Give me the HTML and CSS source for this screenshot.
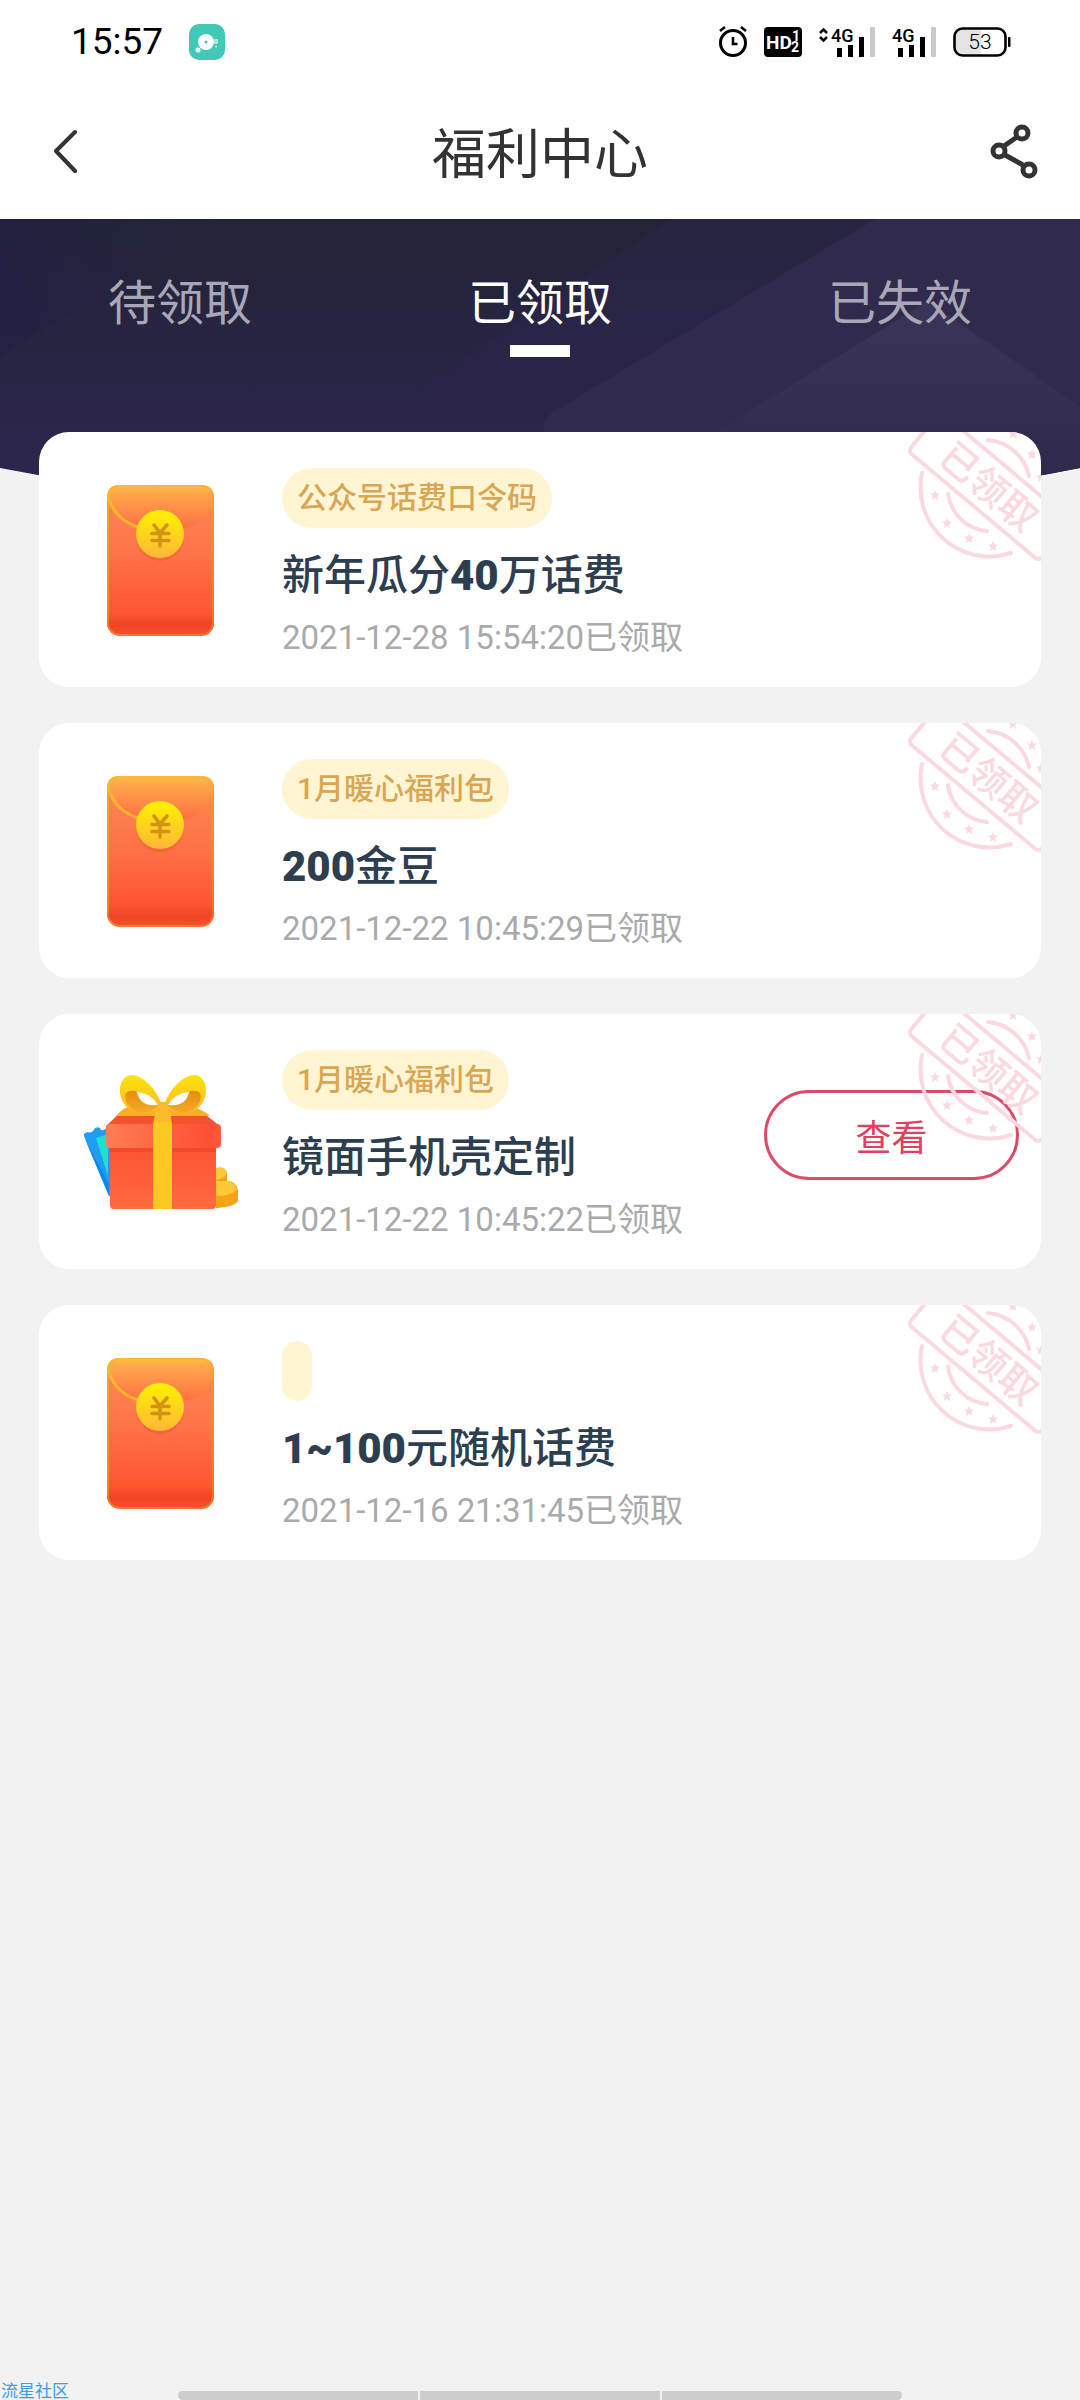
FILE: index.html
```html
<!DOCTYPE html>
<html lang="zh-CN">
<head>
<meta charset="utf-8">
<meta name="viewport" content="width=device-width, initial-scale=1">
<title>福利中心</title>
<link rel="stylesheet" href="styles.css">
</head>
<body>
<svg class="defs" width="0" height="0" aria-hidden="true">
  <defs>
    <linearGradient id="envBody" x1="0" y1="0" x2="0" y2="1">
      <stop offset="0" stop-color="#ff8a55"/><stop offset=".45" stop-color="#ff7449"/><stop offset=".85" stop-color="#ff5532"/><stop offset=".93" stop-color="#f04422"/><stop offset="1" stop-color="#f5532f"/>
    </linearGradient>
    <linearGradient id="envFlap" x1="0" y1="0" x2="0" y2="1">
      <stop offset="0" stop-color="#ffc03c"/><stop offset=".18" stop-color="#ffa84c"/><stop offset="1" stop-color="#ff7043"/>
    </linearGradient>
    <linearGradient id="envEdge" x1="0" y1="0" x2="1" y2="0">
      <stop offset="0" stop-color="#ffb733"/><stop offset="1" stop-color="#ffa030"/>
    </linearGradient>
    <linearGradient id="coin" x1="0" y1="0" x2="0" y2="1">
      <stop offset="0" stop-color="#fff200"/><stop offset="1" stop-color="#ffb638"/>
    </linearGradient>
    <linearGradient id="bow" x1="0" y1="0" x2="0" y2="1">
      <stop offset="0" stop-color="#fde50a"/><stop offset="1" stop-color="#fdb62c"/>
    </linearGradient>
    <linearGradient id="bowIn" x1="0" y1="0" x2="0" y2="1">
      <stop offset="0" stop-color="#e2900c"/><stop offset="1" stop-color="#f8a92a"/>
    </linearGradient>
    <linearGradient id="lid" x1="0" y1="0" x2="1" y2="0">
      <stop offset="0" stop-color="#ff7d55"/><stop offset=".9" stop-color="#ff4f33"/><stop offset="1" stop-color="#ff5a3c"/>
    </linearGradient>
    <linearGradient id="box" x1="0" y1="0" x2="0" y2="1">
      <stop offset="0" stop-color="#ff5233"/><stop offset="1" stop-color="#ff6b40"/>
    </linearGradient>
    <symbol id="envelope" viewBox="0 0 160 160">
      <rect x="27" y="5" width="107" height="151" rx="13" fill="url(#envBody)"/>
      <path d="M27 18Q27 5 40 5H121Q134 5 134 18C132 38 116 48 100 48H62C46 46 30 36 27 18Z" fill="url(#envFlap)"/>
      <path d="M27 18Q27 5 40 5Q29 10 31 20Q38 40 60 46V49Q34 42 27 18Z" fill="#ffb32f"/>
      <rect x="28" y="6" width="105" height="149" rx="12" fill="none" stroke="url(#envEdge)" stroke-opacity=".4" stroke-width="2"/>
      <circle cx="80" cy="57" r="24" fill="#e9401e" opacity=".25"/>
      <circle cx="80" cy="54" r="24" fill="url(#coin)"/>
      <path d="M74 45L80 53L87 45M80 53V66M72 53.500H89M72 60.500H89" fill="none" stroke="#d29414" stroke-width="3.600" stroke-linecap="round" stroke-linejoin="round"/>
    </symbol>
    <symbol id="gift" viewBox="0 -18 160 160">
      <path d="M136 88Q145 86 147 93V101Q156 101 158 110V121Q154 127 136 128Z" fill="#f5a414"/>
      <path d="M136 88Q145 86 147 93Q146 98 136 100ZM136 101H147Q156 102 157 110Q150 116 136 116Z" fill="#ffc83a"/>
      <path d="M4 56Q3 53 8 52Q12 54 15 48Q20 46 21 50Q25 51 28 47L36 47V116H29Z" fill="#209df3"/>
      <path d="M16 58L28 54V96Z" fill="#1fe0c8"/>
      <path d="M5 59L29 104V116Z" fill="#0b8aee"/>
      <path d="M26 46L44 29H118L140 46V52H26Z" fill="#f4512f"/>
      <path d="M36 36Q42 29 48 27H112Q124 30 130 36Z" fill="#fcae26"/>
      <path d="M30 64H136V125Q136 129 132 129H34Q30 129 30 125Z" fill="url(#box)"/>
      <rect x="30" y="66" width="106" height="6" fill="#e23b22" opacity=".45"/>
      <rect x="26" y="44" width="115" height="24" rx="4" fill="url(#lid)"/>
      <path d="M76 32H90L92 44V129H73V44Z" fill="#fdc821"/>
      <path d="M82 25C76 8 62-6 50-5C40-3 37 12 43 22C50 36 73 36 82 25Z" fill="url(#bow)"/>
      <path d="M84 25C90 8 104-6 116-5C126-3 129 12 123 22C116 36 93 36 84 25Z" fill="url(#bow)"/>
      <path d="M45 16Q46 10 56 11Q60 21 79 25Q62 40 50 27Q45 22 45 16Z" fill="url(#bowIn)"/>
      <path d="M121 16Q120 10 110 11Q106 21 87 25Q104 40 116 27Q121 22 121 16Z" fill="url(#bowIn)"/>
      <path d="M57 12Q71 13 78 25Q60 27 57 12Z" fill="#fff"/>
      <path d="M109 12Q95 13 88 25Q106 27 109 12Z" fill="#fff"/>
      <path d="M79 22H87L91 42H75Z" fill="#fcb92a"/>
    </symbol>
    <path id="star" d="M0-5L1.500-1.600L5-1.500L2.400 1L3 5L0 3L-3 5L-2.400 1L-5-1.500L-1.500-1.600Z"/>
    <symbol id="stamp" viewBox="0 0 150 140">
      <g fill="none" stroke="#fbd9df" stroke-width="4" stroke-linecap="round">
        <rect x="0" y="-51" width="171" height="51" rx="5" transform="translate(8 19) rotate(40)"/>
        <path d="M22 41A69 69 0 0 0 111 121M48 62A43 43 0 0 0 87 99M88 8A46 46 0 0 1 129 44"/>
      </g>
      <g fill="#fbd9df">
        <use href="#star" x="35" y="63"/><use href="#star" x="47" y="91"/><use href="#star" x="69" y="106"/><use href="#star" x="93" y="114"/>
        <use href="#star" x="132" y="22"/><use href="#star" x="141" y="45"/><use href="#star" x="113" y="1"/>
        <text class="stamp-text" text-anchor="middle" x="85" y="-11" transform="translate(8 19) rotate(40)">已领取</text>
      </g>
    </symbol>
  </defs>
</svg>

<header class="top">
  <div class="status">
    <span class="time">15:57</span>
    <svg class="app" width="36" height="36" viewBox="0 0 36 36" aria-hidden="true">
      <rect width="36" height="36" rx="10" fill="#40c9b7"/>
      <circle cx="17" cy="18" r="8" fill="#fff"/><circle cx="17" cy="18" r="1.500" fill="#40c9b7"/><circle cx="9" cy="26" r="2.500" fill="#fff"/>
      <path d="M26 15V20M28 15V20M26 22.500H28" stroke="#c8f0ea" stroke-width="1.500"/>
    </svg>
    <div class="indicators">
      <svg width="28" height="32" viewBox="0 0 28 32" aria-label="闹钟">
        <circle cx="14" cy="17" r="12.500" fill="none" stroke="#000" stroke-width="3"/>
        <path d="M14 11V18H18.500M1 5L6 1M27 5L22 1" fill="none" stroke="#000" stroke-width="2.600"/>
      </svg>
      <svg width="38" height="30" viewBox="0 0 38 30">
        <rect width="38" height="30" rx="4" fill="#000"/>
        <text class="hd" x="2" y="22">HD</text>
        <text class="hd-small" x="28" y="14">1</text>
        <text class="hd-small" x="27" y="25">2</text>
      </svg>
      <svg width="56" height="30" viewBox="0 0 56 30">
        <path d="M1 6L4.500 2.500L8 6M1 10L4.500 13.500L8 10" fill="none" stroke="#000" stroke-width="2.500"/>
        <text class="net" x="12" y="15">4G</text>
        <path d="M18 21h5v9h-5zM29 18h5v12h-5zM40 10h5v20h-5z"/><rect x="51" width="5" height="30" rx="1" fill="#c9c9c9"/>
      </svg>
      <svg width="44" height="30" viewBox="0 0 44 30">
        <text class="net" x="0" y="15">4G</text>
        <path d="M6 21h5v9h-5zM17 18h5v12h-5zM28 10h5v20h-5z"/><rect x="39" width="5" height="30" rx="1" fill="#c9c9c9"/>
      </svg>
      <svg width="58" height="30" viewBox="0 0 58 30">
        <path d="M9 2H28V28H9Q2 28 2 20V10Q2 2 9 2Z" fill="#e4e4e4"/>
        <rect x="1.500" y="1.500" width="51" height="27" rx="8" fill="none" stroke="#000" stroke-width="2.600"/>
        <rect x="55" y="10" width="2.500" height="10" rx="1"/>
        <text class="battery" x="27" y="22" text-anchor="middle">53</text>
      </svg>
    </div>
  </div>
  <div class="nav">
    <button class="icon-btn back" type="button" aria-label="返回">
      <svg width="24" height="46" viewBox="0 0 24 46"><path d="M21 3L2 22L21 42" fill="none" stroke="#333" stroke-width="4" stroke-linecap="round" stroke-linejoin="round"/></svg>
    </button>
    <h1>福利中心</h1>
    <button class="icon-btn share" type="button" aria-label="分享">
      <svg width="48" height="56" viewBox="0 0 48 56" fill="none" stroke="#333" stroke-width="5">
        <path d="M14 22L27 13M15 31L33 41"/><circle cx="32" cy="9" r="6"/><circle cx="9" cy="27" r="6"/><circle cx="39" cy="46" r="6"/>
      </svg>
    </button>
  </div>
</header>

<main>
  <svg class="hero" viewBox="0 0 1080 310" preserveAspectRatio="none" aria-hidden="true">
    <defs>
      <linearGradient id="heroBase" x1="0" y1="0" x2="0" y2="1"><stop offset="0" stop-color="#232436"/><stop offset=".3" stop-color="#26243f"/><stop offset=".8" stop-color="#2c264d"/></linearGradient>
      <linearGradient id="heroPeak" x1="0" y1="0" x2="0" y2="1"><stop offset="0" stop-color="#3b3659"/><stop offset="1" stop-color="#302b4d"/></linearGradient>
      <linearGradient id="heroLeft" x1="0" y1="0" x2="1" y2="0"><stop offset="0" stop-color="#211f46" stop-opacity=".6"/><stop offset="1" stop-color="#232440" stop-opacity=".3"/></linearGradient>
      <clipPath id="heroShape"><path d="M0 0H1080V249Q540 355 0 249Z"/></clipPath>
    </defs>
    <g clip-path="url(#heroShape)">
      <rect width="1080" height="310" fill="url(#heroBase)"/>
      <path d="M0 0H220L0 138Z" fill="url(#heroLeft)"/>
      <path d="M671 0H875L560 189L420 170Z" fill="#2c274b" opacity=".6"/>
      <path d="M875 0H1080V310H544V205Q545 197 560 189Z" fill="#302b4d"/>
      <path d="M928 82L1080 188V235H680Z" fill="url(#heroPeak)"/>
    </g>
  </svg>

  <nav class="tabs">
    <a href="#pending">待领取</a>
    <a href="#claimed" class="active" aria-current="page">已领取</a>
    <a href="#expired">已失效</a>
  </nav>

  <ul class="cards">
    <li class="card">
      <svg class="pic" aria-hidden="true"><use href="#envelope"/></svg>
      <div class="info">
        <span class="tag">公众号话费口令码</span>
        <h2>新年瓜分<b>40</b>万话费</h2>
        <p>2021-12-28 15:54:20已领取</p>
      </div>
      <svg class="stamp"><use href="#stamp"/></svg>
    </li>
    <li class="card">
      <svg class="pic" aria-hidden="true"><use href="#envelope"/></svg>
      <div class="info">
        <span class="tag">1月暖心福利包</span>
        <h2><b>200</b>金豆</h2>
        <p>2021-12-22 10:45:29已领取</p>
      </div>
      <svg class="stamp"><use href="#stamp"/></svg>
    </li>
    <li class="card">
      <svg class="pic" aria-hidden="true"><use href="#gift"/></svg>
      <div class="info">
        <span class="tag">1月暖心福利包</span>
        <h2>镜面手机壳定制</h2>
        <p>2021-12-22 10:45:22已领取</p>
      </div>
      <button class="view" type="button">查看</button>
      <svg class="stamp"><use href="#stamp"/></svg>
    </li>
    <li class="card">
      <svg class="pic" aria-hidden="true"><use href="#envelope"/></svg>
      <div class="info">
        <span class="tag"></span>
        <h2><b>1~100</b>元随机话费</h2>
        <p>2021-12-16 21:31:45已领取</p>
      </div>
      <svg class="stamp"><use href="#stamp"/></svg>
    </li>
  </ul>
</main>

<footer class="bottom">
  <span class="mark">流星社区</span>
  <div class="home-bar"><i></i><i></i><i></i></div>
</footer>
</body>
</html>
```
FILE: styles.css
```css
* {
  box-sizing: border-box;
}

body {
  margin: 0;
  min-height: 100vh;
  display: flex;
  flex-direction: column;
  background: #f2f2f2;
  font-family: Roboto, "Noto Sans CJK SC", sans-serif;
  color: #333;
}

svg {
  display: block;
  flex: none;
}

.defs {
  position: absolute;
}

h1, h2, p, ul {
  margin: 0;
  padding: 0;
}

button {
  font: inherit;
  background: none;
  cursor: pointer;
}

/* Status bar and title bar */
.top {
  background: #fff;
}

.status {
  height: 84px;
  padding: 0 69px 0 71px;
  display: flex;
  align-items: center;
  color: #000;
}

.time {
  width: 118px;
  font-size: 37px;
  line-height: 48px;
}

.indicators {
  margin-left: auto;
  display: flex;
  align-items: center;
  gap: 17px;
}

.indicators svg {
  overflow: visible;
}

.hd {
  font: 700 19px Roboto, sans-serif;
  fill: #fff;
}

.hd-small {
  font: 700 14px Roboto, sans-serif;
  fill: #fff;
}

.net {
  font: 500 18px Roboto, sans-serif;
}

.battery {
  font: 300 21px Roboto, sans-serif;
}

.nav {
  height: 135px;
  padding: 0 42px;
  display: flex;
  align-items: center;
  justify-content: space-between;
}

.icon-btn {
  width: 68px;
  padding: 0;
  border: 0;
  display: flex;
}

.back {
  padding-left: 12px;
}

.share {
  justify-content: flex-end;
}

h1 {
  padding-top: 8px;
  font-size: 54px;
  font-weight: 400;
  line-height: 80px;
}

/* Tabs over the dark backdrop */
main {
  position: relative;
  flex: 1;
}

.hero {
  position: absolute;
  inset: 0 0 auto;
  width: 100%;
  height: 310px;
}

.tabs {
  position: relative;
  height: 213px;
  padding-top: 49px;
  display: grid;
  grid-template-columns: repeat(3, 1fr);
  justify-items: center;
  align-items: start;
}

.tabs a {
  display: grid;
  justify-items: center;
  gap: 5px;
  font-size: 48px;
  line-height: 72px;
  color: #a9a7b7;
  text-decoration: none;
}

.tabs .active {
  color: #fff;
}

.tabs .active::after {
  content: "";
  width: 60px;
  height: 12px;
  background: #fff;
}

/* Reward cards */
.cards {
  position: relative;
  padding: 0 39px 36px;
  display: grid;
  gap: 36px;
  list-style: none;
}

.card {
  position: relative;
  overflow: hidden;
  padding: 0 22px 0 41px;
  display: flex;
  align-items: center;
  background: #fff;
  border-radius: 30px;
}

.pic {
  width: 160px;
  height: 160px;
  margin-right: 42px;
}

.info {
  flex: 1;
  padding: 36px 0 25px;
}

.tag {
  display: block;
  width: fit-content;
  height: 60px;
  padding: 0 15px;
  border-radius: 30px;
  background: #fff5d3;
  font-size: 30px;
  font-weight: 500;
  line-height: 60px;
  color: #d9a653;
}

h2 {
  margin: 18px 0 8px;
  font-size: 42px;
  font-weight: 500;
  line-height: 60px;
  color: #2c3e50;
}

h2 b {
  font-weight: 900;
}

.info p {
  font-size: 33px;
  line-height: 48px;
  color: #aaa;
}

.view {
  width: 255px;
  height: 90px;
  margin-bottom: 14px;
  padding: 0;
  border: 3px solid #dc4c68;
  border-radius: 45px;
  font-size: 36px;
  color: #e2405f;
}

.stamp {
  position: absolute;
  top: 0;
  right: -9px;
  width: 150px;
  height: 140px;
  pointer-events: none;
}

.stamp-text {
  font: 500 38px "Noto Sans CJK SC", sans-serif;
}

/* Gesture bar */
.bottom {
  height: 18px;
  display: grid;
  grid-template-columns: 1fr 67% 1fr;
  align-items: end;
}

.mark {
  padding-left: 1px;
  font-size: 17px;
  line-height: 18px;
  color: #3d9be9;
}

.home-bar {
  height: 9px;
  display: flex;
  gap: 2px;
  border-radius: 5px;
  overflow: hidden;
}

.home-bar i {
  flex: 1;
  background: #cdcdcd;
}
```
